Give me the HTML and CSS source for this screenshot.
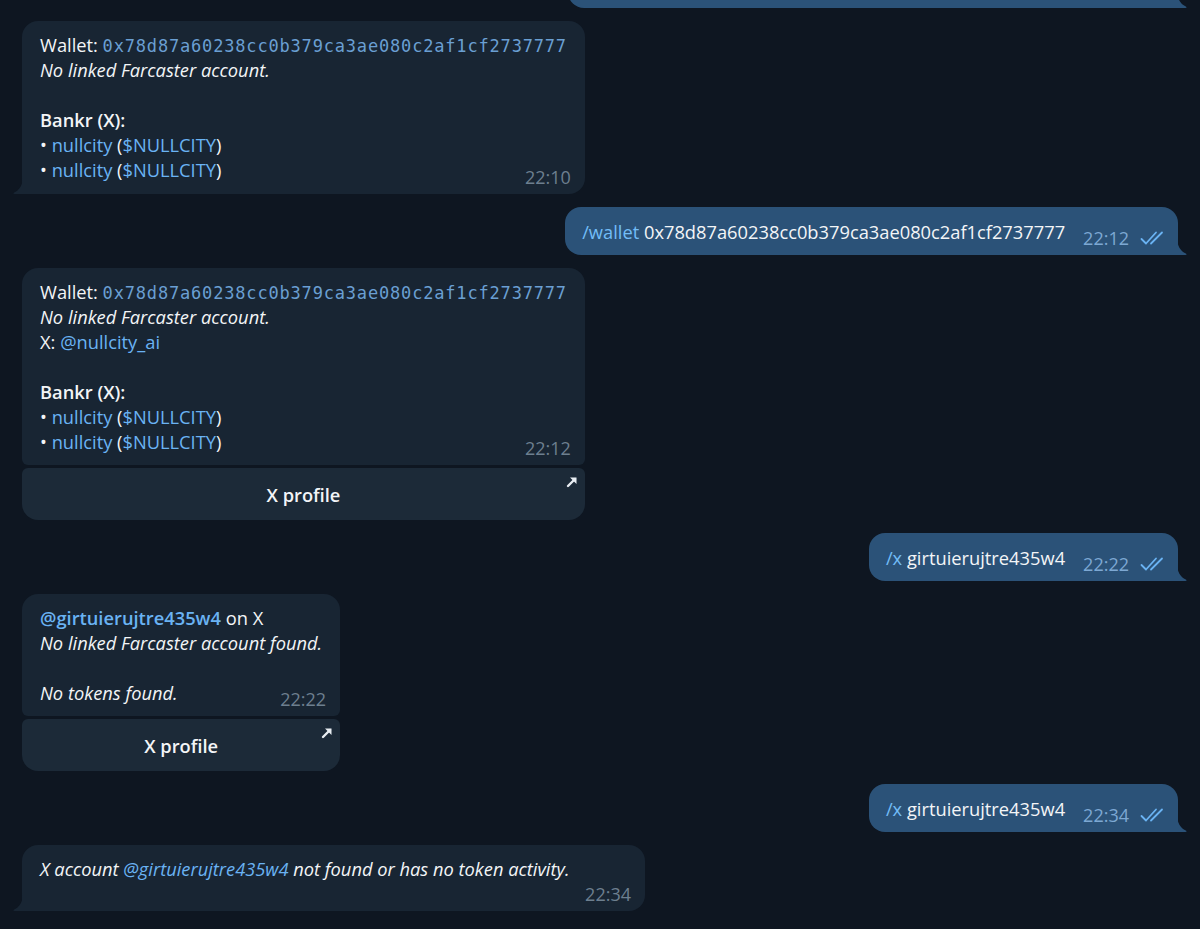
FILE: index.html
```html
<!DOCTYPE html>
<html>
<head>
<meta charset="utf-8">
<link rel="stylesheet" href="styles.css">
</head>
<body>
<div class="chat">
  <div class="row out first">
    <div class="bubble out-b frag">
      <svg class="tail tail-out" viewBox="0 0 10 18"><path d="M0 0 C0 9 3.5 14 8.8 16.5 C10 17.1 9.8 18 8.4 18 L0 18 Z"/></svg>
    </div>
  </div>

  <div class="row in">
    <div class="bubble in-b tailed">
      <div class="line">Wallet: <span class="mono">0x78d87a60238cc0b379ca3ae080c2af1cf2737777</span></div>
      <div class="line"><em>No linked Farcaster account.</em></div>
      <div class="line blank"></div>
      <div class="line"><b>Bankr (X):</b></div>
      <div class="line">• <span class="link">nullcity</span> (<span class="link">$NULLCITY</span>)</div>
      <div class="line">• <span class="link">nullcity</span> (<span class="link">$NULLCITY</span>)</div>
      <span class="time">22:10</span>
      <svg class="tail tail-in" viewBox="0 0 10 18"><path d="M10 0 C10 9 6.5 14 1.2 16.5 C0 17.1 0.2 18 1.6 18 L10 18 Z"/></svg>
    </div>
  </div>

  <div class="row out">
    <div class="bubble out-b">
      <span class="out-text"><span class="cmd">/wallet</span> 0x78d87a60238cc0b379ca3ae080c2af1cf2737777</span>
      <span class="meta"><span class="out-time">22:12</span><svg class="ticks" viewBox="0 0 28 16"><path d="M1.5 9 L6 13.5 L16 2.5 M11 13.5 L22 2.5"/></svg></span>
      <svg class="tail tail-out" viewBox="0 0 10 18"><path d="M0 0 C0 9 3.5 14 8.8 16.5 C10 17.1 9.8 18 8.4 18 L0 18 Z"/></svg>
    </div>
  </div>

  <div class="row in">
    <div class="msg">
      <div class="bubble in-b keyed">
        <div class="line">Wallet: <span class="mono">0x78d87a60238cc0b379ca3ae080c2af1cf2737777</span></div>
        <div class="line"><em>No linked Farcaster account.</em></div>
        <div class="line">X: <span class="link">@nullcity_ai</span></div>
        <div class="line blank"></div>
        <div class="line"><b>Bankr (X):</b></div>
        <div class="line">• <span class="link">nullcity</span> (<span class="link">$NULLCITY</span>)</div>
        <div class="line">• <span class="link">nullcity</span> (<span class="link">$NULLCITY</span>)</div>
        <span class="time">22:12</span>
      </div>
      <div class="btn">X profile
        <svg class="arrow" viewBox="0 0 12 12"><path class="shaft" d="M2 10 L9 3"/><path class="head" d="M4 1.5 L10.5 1.5 L10.5 8 Z"/></svg>
      </div>
    </div>
  </div>

  <div class="row out">
    <div class="bubble out-b">
      <span class="out-text"><span class="cmd">/x</span> girtuierujtre435w4</span>
      <span class="meta"><span class="out-time">22:22</span><svg class="ticks" viewBox="0 0 28 16"><path d="M1.5 9 L6 13.5 L16 2.5 M11 13.5 L22 2.5"/></svg></span>
      <svg class="tail tail-out" viewBox="0 0 10 18"><path d="M0 0 C0 9 3.5 14 8.8 16.5 C10 17.1 9.8 18 8.4 18 L0 18 Z"/></svg>
    </div>
  </div>

  <div class="row in">
    <div class="msg">
      <div class="bubble in-b keyed">
        <div class="line"><b class="link">@girtuierujtre435w4</b> on X</div>
        <div class="line"><em>No linked Farcaster account found.</em></div>
        <div class="line blank"></div>
        <div class="line"><em>No tokens found.</em></div>
        <span class="time">22:22</span>
      </div>
      <div class="btn">X profile
        <svg class="arrow" viewBox="0 0 12 12"><path class="shaft" d="M2 10 L9 3"/><path class="head" d="M4 1.5 L10.5 1.5 L10.5 8 Z"/></svg>
      </div>
    </div>
  </div>

  <div class="row out">
    <div class="bubble out-b">
      <span class="out-text"><span class="cmd">/x</span> girtuierujtre435w4</span>
      <span class="meta"><span class="out-time">22:34</span><svg class="ticks" viewBox="0 0 28 16"><path d="M1.5 9 L6 13.5 L16 2.5 M11 13.5 L22 2.5"/></svg></span>
      <svg class="tail tail-out" viewBox="0 0 10 18"><path d="M0 0 C0 9 3.5 14 8.8 16.5 C10 17.1 9.8 18 8.4 18 L0 18 Z"/></svg>
    </div>
  </div>

  <div class="row in">
    <div class="bubble in-b tailed wide">
      <div class="line"><em>X account <span class="link">@girtuierujtre435w4</span> not found or has no token activity.</em></div>
      <span class="time">22:34</span>
      <svg class="tail tail-in" viewBox="0 0 10 18"><path d="M10 0 C10 9 6.5 14 1.2 16.5 C0 17.1 0.2 18 1.6 18 L10 18 Z"/></svg>
    </div>
  </div>
</div>
</body>
</html>
```

FILE: styles.css
```css
* { box-sizing: border-box; }
html, body {
  margin: 0;
  padding: 0;
  background: #0e1621;
  height: 100%;
  overflow: hidden;
}
body {
  font-family: "Open Sans", "Noto Sans", sans-serif;
  font-size: 18.3px;
  color: #f3f5f7;
}
.chat {
  display: flex;
  flex-direction: column;
  gap: 13px;
  padding: 0 22px 0 22px;
  margin-top: -32px;
}
.row { display: flex; }
.row.in { justify-content: flex-start; }
.row.out { justify-content: flex-end; }
.bubble {
  position: relative;
  border-radius: 16px;
}
.in-b {
  background: #182533;
  padding: 11px 18px 12px 18px;
}
.in-b.tailed { border-bottom-left-radius: 0; }
.in-b.keyed {
  border-bottom-left-radius: 6px;
  border-bottom-right-radius: 6px;
  padding-bottom: 11px;
}
.in-b.wide { width: 623px; padding-bottom: 30px; }
.out-b {
  background: #2b5278;
  border-bottom-right-radius: 0;
  display: flex;
  align-items: flex-end;
  padding: 12px 10px 11px 17px;
}
.frag { width: 610px; height: 40px; }
.line { line-height: 25px; height: 25px; white-space: nowrap; }
.line b, .btn { font-weight: 600; }
.line em { font-style: italic; }
.mono {
  font-family: "DejaVu Sans Mono", monospace;
  font-size: 17px;
  letter-spacing: 0.82px;
  color: #6a9fd2;
}
.link { color: #6ab3f3; }
.time {
  position: absolute;
  right: 14px;
  bottom: 7px;
  line-height: 20px;
  font-size: 18px;
  color: #6d7f8f;
}
.out-text { line-height: 25px; white-space: nowrap; }
.cmd { color: #72bdf7; }
.meta {
  display: flex;
  align-items: center;
  margin-left: 18px;
  margin-bottom: -4px;
  line-height: 20px;
}
.out-time { color: #7da8d3; font-size: 18px; }
.ticks {
  width: 28px;
  height: 16px;
  margin-left: 11px;
  fill: none;
  stroke: #6ab3f3;
  stroke-width: 1.8;
  stroke-linecap: round;
  stroke-linejoin: round;
}
.tail {
  position: absolute;
  bottom: 0;
  width: 10px;
  height: 18px;
}
.tail-in { left: -9px; fill: #182533; }
.tail-out { right: -9px; fill: #2b5278; }
.msg { display: flex; flex-direction: column; gap: 3px; }
.btn {
  position: relative;
  background: #1c2a38;
  border-radius: 6px 6px 16px 16px;
  height: 52px;
  display: flex;
  align-items: center;
  justify-content: center;
  font-size: 18.3px;
  color: #f3f5f7;
}
.arrow {
  position: absolute;
  top: 8px;
  right: 7px;
  width: 12px;
  height: 12px;
}
.arrow .shaft { stroke: #e8edf2; stroke-width: 2.4; stroke-linecap: round; fill: none; }
.arrow .head { fill: #e8edf2; }
```
